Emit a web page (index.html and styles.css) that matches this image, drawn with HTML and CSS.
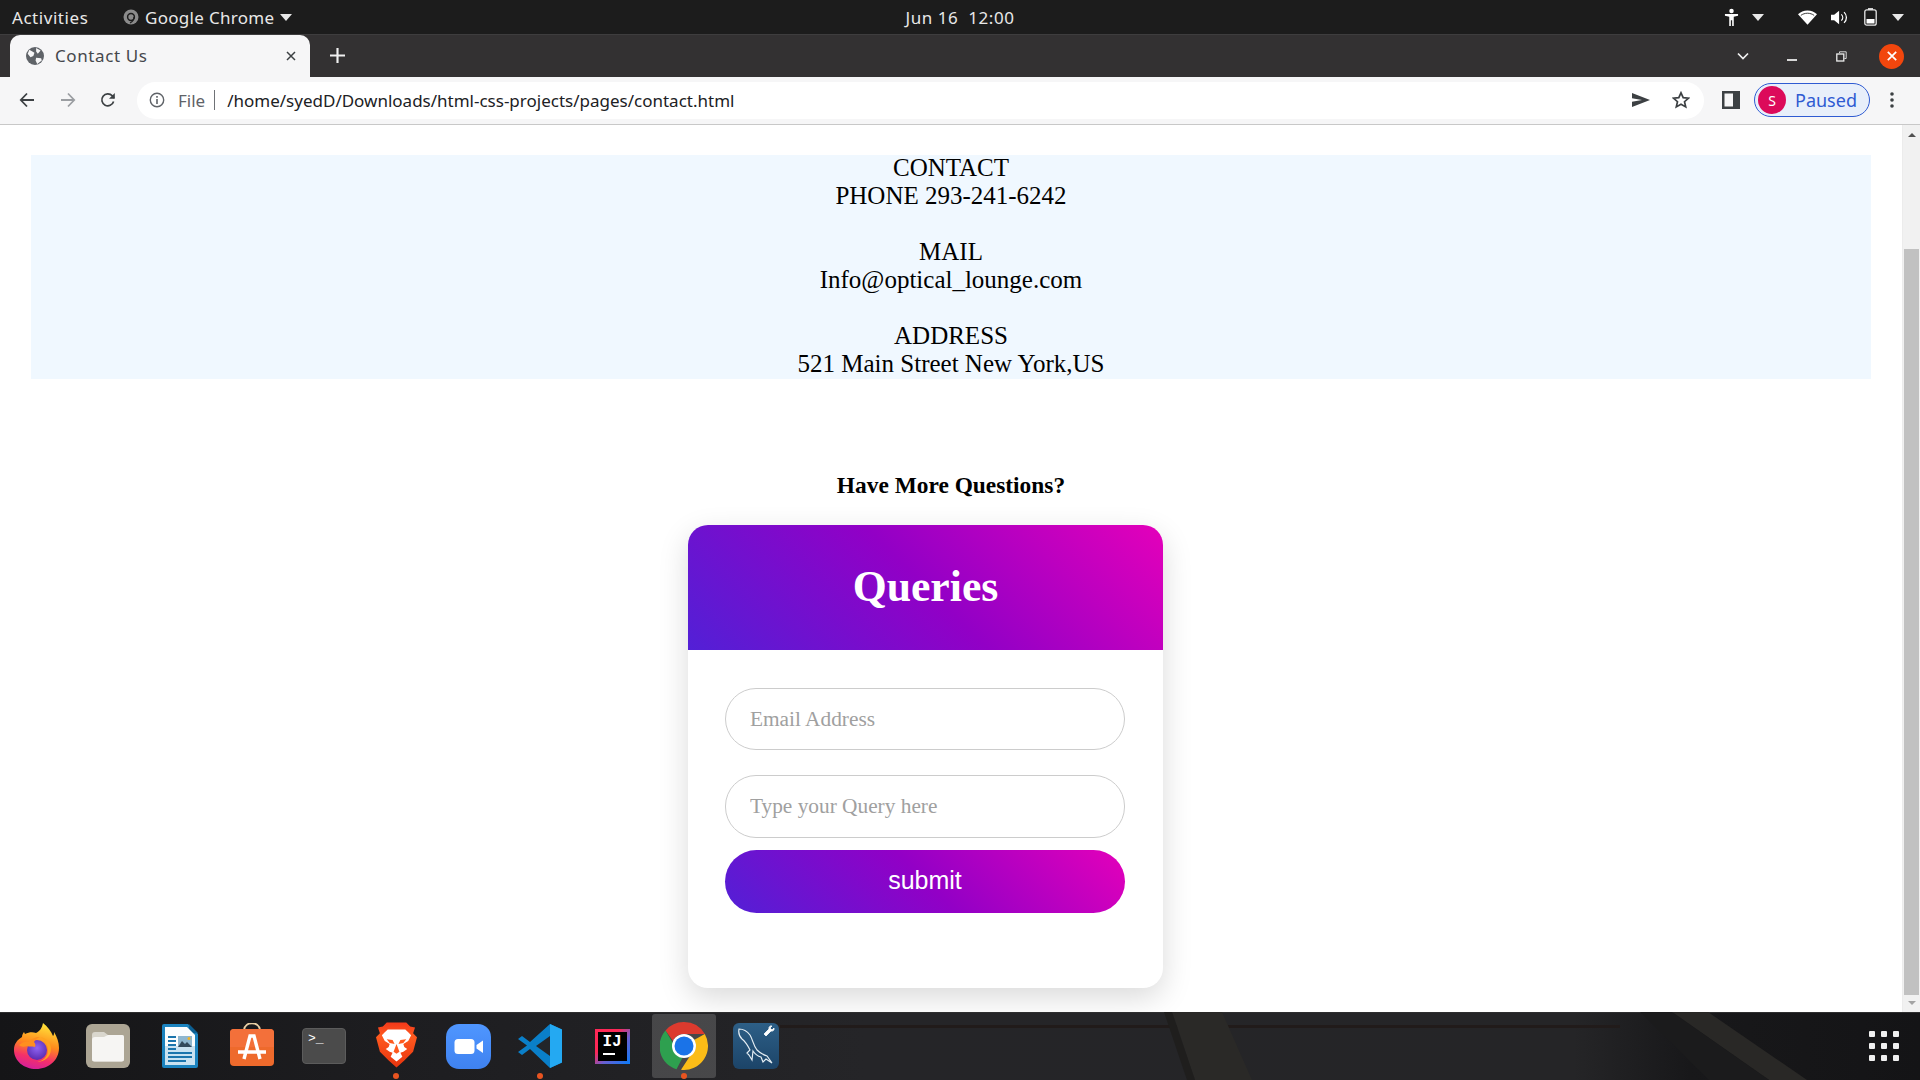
FILE: index.html
```html
<!DOCTYPE html>
<html lang="en">
<head>
<meta charset="utf-8">
<title>Contact Us</title>
<link rel="stylesheet" href="styles.css">
</head>
<body>
<header class="topbar">
  <div class="topbar-left">
    <span class="activities">Activities</span>
    <span class="appmenu">
      <svg class="appicon" viewBox="0 0 16 16"><circle cx="8" cy="8" r="7.5" fill="#8b8b8b"/><circle cx="8" cy="8" r="3.4" fill="none" stroke="#1c1c1c" stroke-width="1.5"/><path d="M11 8c0 4-2 5-4 6" stroke="#1c1c1c" stroke-width="1.2" fill="none"/></svg>
      <span>Google Chrome</span>
      <i class="caret"></i>
    </span>
  </div>
  <div class="clock">Jun 16&nbsp; 12:00</div>
  <div class="tray">
    <svg class="tray-person" viewBox="0 0 16 20"><circle cx="8" cy="3" r="2.4" fill="#fff"/><path d="M1 6.3h14v1.9l-4.6.9V19H8.7v-6H7.3v6H5.6V9.1L1 8.2z" fill="#fff"/></svg>
    <i class="caret caret-person"></i>
    <svg class="tray-wifi" viewBox="0 0 20 15"><path d="M10 15 0 4.2C2.6 1.7 6 .2 10 .2s7.400 1.500 10 4z" fill="#fff"/><path d="M3 5.300C5 3.800 7.400 3 10 3s5 .8 7 2.300" stroke="#1c1c1c" stroke-width=".9" fill="none"/></svg>
    <svg class="tray-sound" viewBox="0 0 20 16"><path d="M0 5h3.500L9 .5v15L3.500 11H0z" fill="#fff"/><path d="M11.500 4.500c2 2 2 5 0 7M14.500 2c3.500 3.300 3.500 8.700 0 12" stroke="#fff" stroke-width="1.400" fill="none"/></svg>
    <svg class="tray-battery" viewBox="0 0 13 18"><rect x="4" y="0" width="5" height="2" fill="#cfcfcf"/><rect x=".8" y="1.800" width="11.400" height="15.400" rx="2" fill="none" stroke="#e8e8e8" stroke-width="1.300"/><rect x="2.500" y="11" width="8" height="4.500" fill="#fff"/></svg>
    <i class="caret caret-last"></i>
  </div>
</header>

<div class="tabstrip">
  <div class="tab">
    <svg class="favicon" viewBox="0 0 16 16"><circle cx="8" cy="8" r="8" fill="#5f6368"/><path d="M3 2.500 7.500 5 6.500 8 4 9 1.500 6zM9 .8 13 3 10.500 6 9 4zM9 9.500l4.500.5.500 2-4 3-1.500-3z" fill="#f6f6f7"/></svg>
    <span class="tab-title">Contact Us</span>
    <svg class="tab-close" viewBox="0 0 10 10"><path d="M1 1l8 8M9 1l-8 8" stroke="#3c4043" stroke-width="1.500"/></svg>
  </div>
  <svg class="newtab" viewBox="0 0 14 14"><path d="M7 0v14M0 7h14" stroke="#f1f1f1" stroke-width="2"/></svg>
  <div class="winctl">
    <svg class="w-chevron" viewBox="0 0 12 8"><path d="M1 1.500 6 6.500l5-5" stroke="#f1f1f1" stroke-width="1.700" fill="none"/></svg>
    <span class="w-min"></span>
    <svg class="w-restore" viewBox="0 0 11 11"><path d="M3.500 2V.8h6.700v6.700H8.500" stroke="#d8d8d8" fill="none"/><rect x=".8" y="3" width="7" height="7" fill="none" stroke="#eee" stroke-width="1.300"/></svg>
    <span class="w-close"><svg viewBox="0 0 10 10"><path d="M.8.8l8.400 8.400M9.200.8.800 9.200" stroke="#fff" stroke-width="1.700"/></svg></span>
  </div>
</div>

<nav class="toolbar">
  <svg class="nav-icon" viewBox="0 0 16 16"><path d="M15 8H2M8 1.500 1.800 8 8 14.500" stroke="#3c4043" stroke-width="1.800" fill="none"/></svg>
  <svg class="nav-icon" viewBox="0 0 16 16"><path d="M1 8h13M8 1.500 14.200 8 8 14.500" stroke="#9b9ea2" stroke-width="1.800" fill="none"/></svg>
  <svg class="nav-icon" viewBox="0 0 16 16"><path d="M13.600 9.500A6 6 0 1 1 12.300 3.800L14 6" stroke="#3c4043" stroke-width="1.700" fill="none"/><path d="M14.800 1v5.800H9z" fill="#3c4043"/></svg>
  <div class="omnibox">
    <svg class="info" viewBox="0 0 16 16"><circle cx="8" cy="8" r="6.700" fill="none" stroke="#5f6368" stroke-width="1.400"/><path d="M8 7v5M8 4v1.700" stroke="#5f6368" stroke-width="1.600"/></svg>
    <span class="scheme">File</span>
    <span class="sep"></span>
    <span class="url">/home/syedD/Downloads/html-css-projects/pages/contact.html</span>
    <svg class="send" viewBox="0 0 18 14"><path d="M0 0l18 7-18 7V8.800L10 7 0 5.200z" fill="#3c4043"/></svg>
    <svg class="star" viewBox="0 0 18 18"><path d="M9 1.800l2.200 4.900 5.300.5-4 3.500 1.200 5.200L9 13.200l-4.700 2.700 1.200-5.200-4-3.500 5.300-.5z" fill="none" stroke="#3c4043" stroke-width="1.700"/></svg>
  </div>
  <svg class="panel" viewBox="0 0 18 18"><path d="M0 0h18v18H0zM2.500 2.500v13H11v-13z" fill="#3c4043" fill-rule="evenodd"/></svg>
  <div class="profile">
    <span class="avatar">S</span>
    <span class="paused">Paused</span>
  </div>
  <svg class="kebab" viewBox="0 0 4 16"><circle cx="2" cy="2" r="1.800" fill="#3c4043"/><circle cx="2" cy="8" r="1.800" fill="#3c4043"/><circle cx="2" cy="14" r="1.800" fill="#3c4043"/></svg>
</nav>

<div class="viewport">
  <main class="page">
    <section class="contact">
      <p class="contact-text">CONTACT<br>PHONE 293-241-6242<br><br>MAIL<br>Info@optical_lounge.com<br><br>ADDRESS<br>521 Main Street New York,US</p>
    </section>
    <h3 class="more">Have More Questions?</h3>
    <form class="card">
      <div class="card-head"><h2>Queries</h2></div>
      <div class="card-body">
        <input class="field" type="text" placeholder="Email Address">
        <input class="field field-query" type="text" placeholder="Type your Query here">
        <button class="submit" type="button">submit</button>
      </div>
    </form>
  </main>
  <aside class="scrollbar">
    <i class="arrow-up"></i>
    <div class="track"><div class="thumb"></div></div>
    <i class="arrow-down"></i>
  </aside>
</div>

<footer class="dock">
  <svg class="wallpaper" viewBox="0 0 1920 68" preserveAspectRatio="none">
    <defs>
      <linearGradient id="wp" x1="0" y1="0" x2="1" y2="0">
        <stop offset="0" stop-color="#151517"/>
        <stop offset=".2" stop-color="#1d1d20"/>
        <stop offset=".45" stop-color="#252528"/>
        <stop offset=".82" stop-color="#252527"/>
        <stop offset=".88" stop-color="#18181a"/>
        <stop offset="1" stop-color="#141416"/>
      </linearGradient>
    </defs>
    <rect width="1920" height="68" fill="url(#wp)"/>
    <rect y="0" width="1920" height="1" fill="#2e2e2f"/>
    <rect x="780" y="13" width="840" height="3" fill="#211b1a"/>
    <path d="M1172 0h50l30 68h-57z" fill="#2a2927"/>
    <path d="M1164 0h8l23 68h-8z" fill="#1f1e1d"/>
    <path d="M1672 0h36l99 68h-38z" fill="#292826"/>
    <path d="M1640 0h32l97 68h-60z" fill="#1b1b1c"/>
  </svg>
  <div class="slot">
    <svg class="ic-firefox" viewBox="0 0 45 46">
      <defs>
        <linearGradient id="ff1" x1="0.6" y1="0" x2="0.35" y2="1"><stop offset="0" stop-color="#ffe33a"/><stop offset=".45" stop-color="#ff8a1c"/><stop offset=".75" stop-color="#f4306a"/><stop offset="1" stop-color="#d41f9c"/></linearGradient>
        <radialGradient id="ff2" cx=".5" cy=".4" r=".6"><stop offset="0" stop-color="#8f63f2"/><stop offset="1" stop-color="#5a2bb0"/></radialGradient>
      </defs>
      <path d="M29 0c-1 5-3 8-7 10-3-1-7-1-11 1l-1-2c-1 1-2 3-2 5C3 17 0 21 0 27c0 11 10 19 22 19 13 0 23-9 23-21 0-6-2-11-5-16 0 2 0 3-1 4-2-5-5-9-10-13z" fill="url(#ff1)"/>
      <circle cx="23" cy="27" r="10" fill="url(#ff2)"/>
      <path d="M26 14c7 1 11 6 11 12 0 8-7 13-14 13 6-1 11-5 11-12 0-5-3-10-8-13z" fill="#ffa31e"/>
      <path d="M5 22c3-3 7-4 10-3 2-3 6-5 11-5-3 1-5 3-6 5 1 1 2 3 1 5-3-1-6 0-8-1-3 1-6 1-8-1z" fill="#ff8f1f"/>
    </svg>
  </div>
  <div class="slot">
    <svg class="ic-files" viewBox="0 0 44 44">
      <rect width="44" height="44" rx="6" fill="#aca594"/>
      <path d="M6 11a3 3 0 0 1 3-3h9l4 3h14a2 2 0 0 1 2 2v22a2.500 2.500 0 0 1-2.500 2.500h-27A2.500 2.500 0 0 1 6 35z" fill="#d9d6cd"/>
      <path d="M6 16a3 3 0 0 1 3-3h9l4-2h14a2 2 0 0 1 2 2v22a2.500 2.500 0 0 1-2.500 2.500h-27A2.500 2.500 0 0 1 6 35z" fill="#f6f5f3"/>
    </svg>
  </div>
  <div class="slot">
    <svg class="ic-writer" viewBox="0 0 36 44">
      <path d="M2 0h24l10 10v32a2 2 0 0 1-2 2H2a2 2 0 0 1-2-2V2a2 2 0 0 1 2-2z" fill="#1b83bf"/>
      <path d="M27 0l9 9-9 .5z" fill="#0c5f92"/>
      <path d="M3 3h22l8 8v11H3z" fill="#fbfdfe"/>
      <path d="M3 22h30v19H3z" fill="#c9e2f1"/>
      <path d="M6 16h8v2H6zM6 20h8v2H6zM6 24h8v2H6zM6 12h8v2H6zM6 28h24v2H6zM6 32h24v2H6zM6 36h18v2H6z" fill="#1b75ad"/>
      <rect x="16" y="12" width="14" height="11" fill="#8fb7cf"/>
      <path d="M16 23l4-6 3 3 2-2 5 5z" fill="#334a5c"/>
      <circle cx="27" cy="14.500" r="1.500" fill="#f0b429"/>
    </svg>
  </div>
  <div class="slot">
    <svg class="ic-software" viewBox="0 0 44 44">
      <path d="M14 7c1-9 15-9 16 0" fill="none" stroke="#e9cfa4" stroke-width="2"/>
      <rect y="6" width="44" height="37" rx="4" fill="#ee6a2c"/>
      <path d="M0 10a4 4 0 0 1 4-4h36a4 4 0 0 1 4 4v14H0z" fill="#f3703a"/>
      <path d="M14 36l6-23h4l6 23M8 29h28" fill="none" stroke="#fff" stroke-width="3.400"/>
    </svg>
  </div>
  <div class="slot">
    <div class="ic-terminal"><span>&gt;_</span></div>
  </div>
  <div class="slot">
    <svg class="ic-brave" viewBox="0 0 42 46">
      <defs><linearGradient id="br" x1="0" y1="0" x2="0" y2="1"><stop offset="0" stop-color="#f2381a"/><stop offset=".3" stop-color="#ff5a1f"/><stop offset="1" stop-color="#e8340e"/></linearGradient></defs>
      <path d="M11 0h20l4 4 5 1-2 6 4 4-4 15-9 9-8 7-8-7-9-9L0 15l4-4-2-6 5-1z" fill="url(#br)"/>
      <path d="M12 7h18l3 3 3 3-3 6-5 3 1 3 3 2-4 3-3 1 2 4-6 5-6-5 2-4-3-1-4-3 3-2 1-3-5-3-3-6 3-3z" fill="#fff"/>
      <path d="M11 17l6 1 2 4-5-1zM31 17l-6 1-2 4 5-1zM21 22l-3 8 3 2 3-2z" fill="#ff5a1f"/>
    </svg>
    <i class="run-dot"></i>
  </div>
  <div class="slot">
    <svg class="ic-zoom" viewBox="0 0 45 45">
      <defs><linearGradient id="zm" x1="0" y1="0" x2="0" y2="1"><stop offset="0" stop-color="#4f96ff"/><stop offset="1" stop-color="#3f82f0"/></linearGradient></defs>
      <rect width="45" height="45" rx="13" fill="url(#zm)"/>
      <rect x="8.500" y="15" width="20" height="15" rx="3.500" fill="#fff"/>
      <path d="M30.500 21l6.500-4.500v12.500L30.500 24.500z" fill="#fff"/>
    </svg>
  </div>
  <div class="slot">
    <svg class="ic-vscode" viewBox="0 0 44 44">
      <path d="M32 0 44 5.500v33L32 44 12 25 4 31 0 28l9-6.500L0 15l4-3 8 6z" fill="#0a7fc9"/>
      <path d="M32 0 44 5.500v33L32 44z" fill="#24a9f2"/>
      <path d="M32 12 18 22l14 10z" fill="#22252a"/>
    </svg>
    <i class="run-dot"></i>
  </div>
  <div class="slot">
    <div class="ic-idea"><div class="ic-idea-in"><span>IJ</span><i></i></div></div>
  </div>
  <div class="slot slot-active">
    <svg class="ic-chrome" viewBox="0 0 48 48">
      <path d="M24 0a24 24 0 0 1 20.800 12H24a12 12 0 0 0-11 7L5.500 8.500A24 24 0 0 1 24 0z" fill="#dc3a2e"/>
      <path d="M5.500 8.500 13.500 22a12 12 0 0 0 9 13.800l-6 11.500A24 24 0 0 1 5.500 8.500z" fill="#2ea04f"/>
      <path d="M44.800 12A24 24 0 0 1 21 47.800l9-13.800A12 12 0 0 0 34 18z" fill="#fbbc17"/>
      <circle cx="24" cy="24" r="12" fill="#fff"/>
      <circle cx="24" cy="24" r="9.500" fill="#1a73e8"/>
    </svg>
    <i class="run-dot"></i>
  </div>
  <div class="slot">
    <svg class="ic-mysql" viewBox="0 0 46 46">
      <defs><linearGradient id="my" x1="0" y1="0" x2="0" y2="1"><stop offset="0" stop-color="#2d5f87"/><stop offset="1" stop-color="#1c4468"/></linearGradient></defs>
      <rect width="46" height="46" rx="6" fill="url(#my)"/>
      <path d="M6 6c4 0 8 2 11 6 3 5 3 10 7 15 3 3 7 5 10 6l5 7-6-4-3 3-2-5c-4-1-6-3-8-6l-1 9-3-5-2-2 3-3c-2-4-4-8-8-11-2-2-4-5-3-10z" fill="none" stroke="#e4edf3" stroke-width="1.200"/>
      <path d="M31 11l5-5c-.5-2 1-3.500 3-3l-2 2 2 2 2-2c.5 2-1 3.500-3 3l-5 5z" fill="#fff" stroke="#fff" stroke-width=".8"/>
    </svg>
  </div>
  <div class="apps">
    <i></i><i></i><i></i><i></i><i></i><i></i><i></i><i></i><i></i>
  </div>
</footer>
</body>
</html>
```

FILE: styles.css
```css
* { box-sizing: border-box; }
html, body { margin: 0; height: 100%; }
body {
  display: flex;
  flex-direction: column;
  height: 1080px;
  overflow: hidden;
  background: #fff;
  font-family: "Noto Sans", sans-serif;
}
i { display: block; }

/* system bar */
.topbar {
  height: 34px;
  flex: none;
  display: grid;
  grid-template-columns: 1fr auto 1fr;
  align-items: center;
  background: #1c1c1c;
  color: #e8e8e8;
  font-size: 17px;
  letter-spacing: .55px;
}
.topbar-left { display: flex; align-items: center; padding-left: 12px; }
.activities { width: 111px; white-space: nowrap; }
.appmenu { display: flex; align-items: center; gap: 6px; white-space: nowrap; letter-spacing: .3px; }
.appicon { width: 16px; height: 16px; }
.caret {
  width: 0; height: 0;
  border-left: 6px solid transparent;
  border-right: 6px solid transparent;
  border-top: 7px solid #e8e8e8;
}
.tray { display: flex; align-items: center; justify-content: flex-end; padding-right: 16px; }
.tray-person { width: 15px; height: 19px; }
.caret-person { margin-left: 13px; }
.tray-wifi { width: 19px; height: 15px; margin-left: 34px; }
.tray-sound { width: 18px; height: 15px; margin-left: 14px; }
.tray-battery { width: 13px; height: 18px; margin-left: 15px; }
.caret-last { margin-left: 15px; }

/* tabs */
.tabstrip {
  height: 43px;
  flex: none;
  display: flex;
  align-items: flex-end;
  background: #333132;
  border-top: 1px solid #3e3d3e;
}
.tab {
  width: 300px;
  height: 42px;
  margin-left: 10px;
  padding: 0 14px 0 16px;
  display: flex;
  align-items: center;
  background: #f6f6f7;
  border-radius: 10px 10px 0 0;
  color: #45484c;
}
.favicon { width: 18px; height: 18px; flex: none; }
.tab-title { margin: -2px 0 0 11px; font-size: 17px; letter-spacing: .6px; flex: 1; }
.tab-close { width: 10px; height: 10px; }
.newtab { width: 15px; height: 15px; margin: 0 0 14px 20px; }
.winctl { margin-left: auto; height: 100%; display: flex; align-items: center; padding-right: 16px; }
.w-chevron { width: 12px; height: 8px; }
.w-min { width: 10px; height: 2px; background: #d8d8d8; margin: 7px 0 0 38px; }
.w-restore { width: 11px; height: 11px; margin-left: 39px; }
.w-close {
  width: 25px; height: 25px;
  margin-left: 32px;
  display: flex; align-items: center; justify-content: center;
  border-radius: 50%;
  background: #f2460d;
}
.w-close svg { width: 10px; height: 10px; }

/* toolbar */
.toolbar {
  height: 48px;
  flex: none;
  display: flex;
  align-items: center;
  background: #f6f6f7;
  border-bottom: 1px solid #c8c8c8;
  padding: 0 0 1px 19px;
}
.nav-icon { width: 16px; height: 16px; margin-right: 25px; }
.nav-icon:nth-child(3) { margin-right: 0; margin-left: -1px; }
.omnibox {
  width: 1567px;
  height: 37px;
  margin-left: 21px;
  padding: 0 12px 0 12px;
  display: flex;
  align-items: center;
  background: #fff;
  border-radius: 19px;
  font-size: 17px;
}
.info { width: 16px; height: 16px; flex: none; }
.scheme { margin-left: 13px; color: #5f6368; }
.sep { width: 1px; height: 20px; background: #6f7276; margin: 0 12px 0 9px; }
.url { color: #202124; flex: 1; white-space: nowrap; }
.send { width: 18px; height: 14px; margin-right: 22px; }
.star { width: 18px; height: 18px; margin-right: 2px; }
.panel { width: 18px; height: 18px; margin-left: 18px; }
.profile {
  width: 116px;
  height: 34px;
  margin-left: 14px;
  padding-left: 3px;
  display: flex;
  align-items: center;
  background: #e8effa;
  border: 1px solid #2f5bd2;
  border-radius: 17px;
  color: #2f5bd2;
  font-size: 18px;
}
.avatar {
  width: 28px; height: 28px;
  border-radius: 50%;
  background: #dc0a5a;
  color: #fff;
  font-size: 14px;
  display: flex; align-items: center; justify-content: center;
}
.paused { margin-left: 9px; }
.kebab { width: 4px; height: 16px; margin-left: 20px; }

/* page */
.viewport { flex: 1; min-height: 0; display: flex; overflow: hidden; }
.page {
  flex: 1;
  min-width: 0;
  padding-top: 30px;
  font-family: "Liberation Serif", serif;
  color: #000;
  overflow: hidden;
}
.contact {
  display: flow-root;
  margin: 0 31px;
  background: #f0f8ff;
  height: 224px;
}
.contact-text {
  margin: -1px 0 0;
  font-size: 25px;
  text-align: center;
  line-height: 28px;
}
.more {
  margin: 92px 0 0;
  font-size: 23.4px;
  line-height: 28px;
  font-weight: bold;
  text-align: center;
}
.card {
  width: 475px;
  height: 463px;
  margin: 26px 0 0 688px;
  background: #fff;
  border-radius: 20px;
  box-shadow: 0 10px 30px rgba(0,0,0,.15);
  overflow: hidden;
}
.card-head {
  height: 125px;
  padding-bottom: 4px;
  display: flex; align-items: center; justify-content: center;
  background: linear-gradient(45deg, #5220d6, #9200c6 50%, #e400ba);
}
.card-head h2 { margin: 0; color: #fff; font-size: 43.7px; font-weight: bold; }
.card-body { padding: 38px 37px 0 37px; display: flex; flex-direction: column; }
.field {
  width: 400px;
  height: 62px;
  padding: 0 24px;
  border: 1px solid #ccc;
  border-radius: 31px;
  outline: none;
  font-family: "Liberation Serif", serif;
  font-size: 21.33px;
  background: #fff;
}
.field::placeholder { color: #a0a0a0; opacity: 1; }
.field-query { margin-top: 25px; height: 63px; }
.submit {
  width: 400px;
  height: 63px;
  margin-top: 12px;
  padding-bottom: 3px;
  border: 0;
  border-radius: 32px;
  background: linear-gradient(45deg, #5220d6, #9200c6 50%, #e400ba);
  color: #fff;
  font-family: "Liberation Sans", sans-serif;
  font-size: 25px;
}

/* scrollbar */
.scrollbar {
  width: 18px;
  flex: none;
  display: flex;
  flex-direction: column;
  align-items: center;
  background: #f1f1f1;
  border-left: 1px solid #ececec;
}
.arrow-up {
  width: 0; height: 0; margin-top: 8px;
  border-left: 4px solid transparent;
  border-right: 4px solid transparent;
  border-bottom: 4px solid #505050;
}
.arrow-down {
  width: 0; height: 0; margin: 0 0 7px;
  border-left: 4px solid transparent;
  border-right: 4px solid transparent;
  border-top: 4px solid #a3a3a3;
}
.track { flex: 1; width: 100%; padding: 112px 1px 0 1px; min-height: 0; display: flex; flex-direction: column; }
.thumb { height: 746px; background: #c1c1c1; }

/* dock */
.dock {
  height: 68px;
  flex: none;
  position: relative;
  display: flex;
  align-items: center;
  background: #1a1a1c;
}
.wallpaper { position: absolute; left: 0; top: 0; width: 100%; height: 100%; }
.slot {
  width: 72px;
  height: 64px;
  flex: none;
  position: relative;
  display: flex;
  align-items: center;
  justify-content: center;
}
.slot-active::before {
  content: "";
  position: absolute;
  left: 4px; right: 4px; top: 0; bottom: 0;
  border-radius: 3px;
  background: rgba(255,255,255,.17);
}
.slot > svg, .slot > div { position: relative; }
.run-dot {
  position: absolute;
  left: 33px; bottom: -1px;
  width: 6px; height: 6px;
  border-radius: 50%;
  background: #e95420;
}
.ic-firefox { width: 45px; height: 46px; }
.ic-files { width: 44px; height: 44px; }
.ic-writer { width: 36px; height: 44px; }
.ic-software { width: 44px; height: 44px; margin-top: -3px; }
.ic-terminal {
  width: 44px; height: 36px;
  background: #4b4b4b;
  border: 1px solid #5c5c5c;
  border-radius: 4px;
  color: #fff;
  font-family: "Liberation Mono", monospace;
  font-size: 13px;
  line-height: 14px;
  padding: 3px 0 0 5px;
}
.ic-brave { width: 41px; height: 46px; margin-top: -2px; }
.ic-zoom { width: 45px; height: 45px; }
.ic-vscode { width: 44px; height: 44px; }
.ic-idea {
  width: 35px; height: 35px;
  padding: 3px;
  background: linear-gradient(135deg, #fe2857 0 35%, #6a5fd0 60%, #087cfa 100%);
}
.ic-idea-in {
  width: 100%; height: 100%;
  background: #000;
  color: #fff;
  font-family: "Liberation Mono", monospace;
  font-weight: bold;
  font-size: 16px;
  line-height: 16px;
  padding: 2px 0 0 5px;
}
.ic-idea-in span { display: block; }
.ic-idea-in i { width: 12px; height: 2px; margin-top: 3px; background: #fff; }
.ic-chrome { width: 48px; height: 48px; }
.ic-mysql { width: 46px; height: 46px; }
.apps {
  position: relative;
  margin-left: auto;
  margin-right: 21px;
  display: grid;
  grid-template-columns: repeat(3, 6px);
  grid-auto-rows: 6px;
  gap: 6px;
}
.apps i { background: #f0f0f0; border-radius: 1px; }
```
